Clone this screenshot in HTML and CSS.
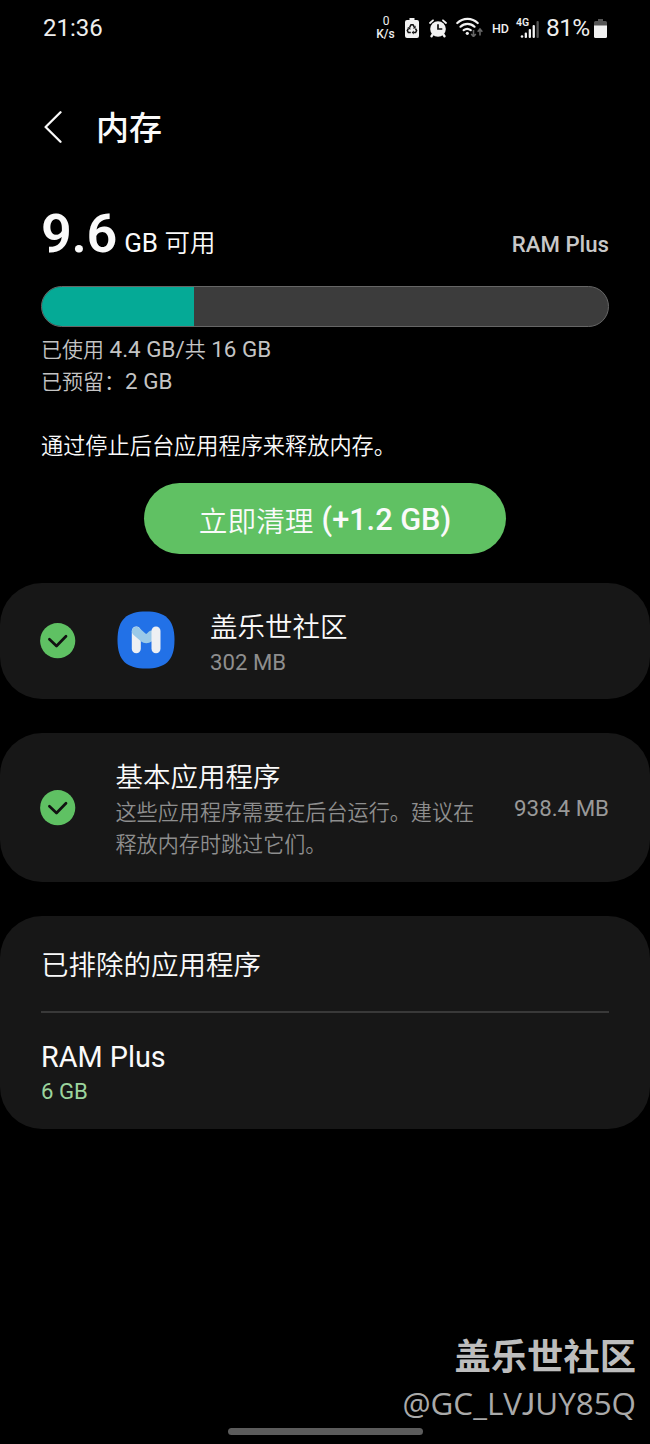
FILE: index.html
```html
<!DOCTYPE html>
<html lang="zh-CN">
<head>
<meta charset="utf-8">
<title>内存</title>
<link rel="stylesheet" href="styles.css">
</head>
<body>
<div class="screen">
  <header class="status">
    <span class="clock">21:36</span>
    <div class="status-icons">
      <div class="speed"><span>0</span><span>K/s</span></div>
      <svg class="i-recycle" width="14" height="20" viewBox="0 0 14 20">
        <path fill="#f2f2f2" d="M4.500 0h5v2H12a2 2 0 0 1 2 2v14a2 2 0 0 1-2 2H2a2 2 0 0 1-2-2V4a2 2 0 0 1 2-2h2.500z"/>
        <path fill="none" stroke="#111" stroke-width="1.500" d="M4.700 9.200 6 6.800h2l1.300 2.200M10.500 10.600l1.100 2-1 1.900H8.300M5.800 14.500H3.300l-1-1.900 1.200-2.200"/>
        <path fill="#111" d="M10.600 7.500v3H7.800zM8.700 12.400v4l-2-2zM2.300 9.300h3v2.800z"/>
      </svg>
      <svg class="i-alarm" width="18" height="19" viewBox="0 0 18 19">
        <path fill="none" stroke="#f2f2f2" stroke-width="1.800" stroke-linecap="round" d="M1 4 4 1.300M17 4l-3-2.700"/>
        <path fill="none" stroke="#f2f2f2" stroke-width="2.400" stroke-linecap="round" d="M4 15l-1.500 2.200M14 15l1.500 2.200"/>
        <circle cx="9" cy="10" r="7.800" fill="#f2f2f2"/>
        <path fill="none" stroke="#111" stroke-width="1.700" d="M9 5.300V10h4.300"/>
      </svg>
      <svg class="i-wifi" width="28" height="20" viewBox="0 0 28 20">
        <g fill="none" stroke="#f2f2f2" stroke-width="2.200" stroke-linecap="round">
          <path d="M1.300 6a14.500 14.500 0 0 1 20.400 0M4.500 9.700a10 10 0 0 1 14 0M7.700 13.200a5.600 5.600 0 0 1 7 0"/>
        </g>
        <circle cx="11.300" cy="16.300" r="1.600" fill="#f2f2f2"/>
        <path fill="none" stroke="#666" stroke-width="1.600" d="M17.500 13v6.500M15.200 17l2.300 2.500 2.300-2.500M24 18.500V12M21.700 14.700 24 12l2.300 2.700"/>
      </svg>
      <span class="hd">HD</span>
      <div class="cell">
        <span class="net">4G</span>
        <svg width="19" height="17" viewBox="0 0 19 17">
          <g fill="#f2f2f2"><circle cx="2" cy="15.500" r="1.300"/><rect x="4.700" y="11.500" width="2.300" height="5.500" rx="1"/><rect x="8.700" y="8" width="2.300" height="9" rx="1"/><rect x="12.600" y="4" width="2.300" height="13" rx="1"/></g>
          <rect x="16.500" y="0" width="2.300" height="17" rx="1" fill="#555"/>
        </svg>
      </div>
      <span class="percent">81%</span>
      <svg class="i-battery" width="13" height="19" viewBox="0 0 13 19">
        <path fill="#555" d="M4 0h5v2h2.500A1.500 1.500 0 0 1 13 3.500V7H0V3.500A1.500 1.500 0 0 1 1.500 2H4z"/>
        <path fill="#f2f2f2" d="M0 6.500h13v11a1.500 1.500 0 0 1-1.500 1.500h-10A1.500 1.500 0 0 1 0 17.500z"/>
      </svg>
    </div>
  </header>

  <div class="titlebar">
    <svg width="18" height="32" viewBox="0 0 18 32"><path fill="none" stroke="#fafafa" stroke-width="2.300" stroke-linecap="round" stroke-linejoin="round" d="M16.500 1.300 1.600 16l14.900 14.700"/></svg>
    <h1 class="title">内存</h1>
  </div>

  <section class="summary">
    <div class="available">
      <div class="amount"><span class="num">9.6</span><span class="unit">GB <span class="thin">可用</span></span></div>
      <span class="ramplus">RAM Plus</span>
    </div>
    <div class="bar"><div class="used"></div></div>
    <div class="stats">
      <div><span class="cj">已使用</span> 4.4 GB/<span class="cj">共</span> 16 GB</div>
      <div><span class="cj">已预留：</span>2 GB</div>
    </div>
    <p class="hint">通过停止后台应用程序来释放内存。</p>
    <button class="clean"><span class="cjk-part">立即清理</span><span class="gain">(+1.2 GB)</span></button>
  </section>

  <section class="card card-app">
    <svg class="check" width="36" height="36" viewBox="0 0 36 36"><circle cx="17.700" cy="17.700" r="17.600" fill="#5fc163"/><path fill="none" stroke="#111" stroke-width="2.700" stroke-linecap="round" stroke-linejoin="round" d="m9.400 16.200 7.100 6.800L26 13.200"/></svg>
    <svg class="appicon" width="58" height="58" viewBox="0 0 58 58">
      <path fill="#2271e7" d="M29 .5C48 .5 57.500 8 57.500 29S48 57.500 29 57.500 .5 50 .5 29 10 .5 29 .5z"/>
      <path fill="none" stroke="#eef0f3" stroke-width="9" stroke-linecap="round" d="M19.300 20v17.700"/>
      <path fill="none" stroke="#9ac9e8" stroke-width="9" stroke-linecap="round" stroke-linejoin="round" d="m19.300 20.300 7 6.200q3 2.200 6 0l2.500-2.400"/>
      <path fill="none" stroke="#eef0f3" stroke-width="9" stroke-linecap="round" d="M39 20v17.700"/>
    </svg>
    <div class="text">
      <div class="name">盖乐世社区</div>
      <div class="size">302 MB</div>
    </div>
  </section>

  <section class="card card-basic">
    <svg class="check" width="36" height="36" viewBox="0 0 36 36"><circle cx="17.700" cy="17.700" r="17.600" fill="#5fc163"/><path fill="none" stroke="#111" stroke-width="2.700" stroke-linecap="round" stroke-linejoin="round" d="m9.400 16.200 7.100 6.800L26 13.200"/></svg>
    <div class="text">
      <div class="name">基本应用程序</div>
      <div class="desc">这些应用程序需要在后台运行。建议在<br>释放内存时跳过它们。</div>
    </div>
    <span class="basic-size">938.4 MB</span>
  </section>

  <section class="card card-more">
    <div class="excluded">已排除的应用程序</div>
    <div class="plus">
      <div class="plus-name">RAM Plus</div>
      <div class="plus-size">6 GB</div>
    </div>
  </section>

  <footer class="foot">
    <div class="mark">盖乐世社区</div>
    <div class="user">@GC_LV<span class="j">J</span>UY85Q</div>
    <div class="handle"></div>
  </footer>
</div>
</body>
</html>
```
FILE: styles.css
```css
* { box-sizing: border-box; }
body { margin: 0; background: #000; }
.screen {
  width: 650px; height: 1444px; overflow: hidden;
  display: flex; flex-direction: column;
  background: #000; color: #fafafa;
  font-family: Roboto, "Noto Sans CJK SC", sans-serif;
  white-space: nowrap;
}
.status { height: 56px; padding: 0 43px; display: flex; justify-content: space-between; align-items: center; flex: none; }
.clock { font-size: 24px; line-height: 30px; color: #eee; margin-top: -1px; }
.status-icons { display: flex; align-items: center; color: #eee; }
.speed { display: flex; flex-direction: column; align-items: center; font-size: 12px; line-height: 13px; width: 19px; font-weight: 500; }
.speed span:first-child { padding-left: 1px; font-weight: 400; }
.i-recycle { margin-left: 10px; }
.i-alarm { margin-left: 10px; }
.i-wifi { margin-left: 9px; margin-top: -2px; }
.hd { font-size: 12.500px; font-weight: 500; margin-left: 8px; width: 17px; }
.cell { display: flex; align-items: flex-end; height: 20px; width: 23px; margin-left: 7px; position: relative; justify-content: flex-end; }
.net { position: absolute; left: 0; top: -1px; font-size: 10.500px; line-height: 11px; font-weight: 600; }
.percent { font-size: 24.500px; line-height: 30px; margin-left: 7px; width: 44px; letter-spacing: -0.600px; }
.i-battery { margin-left: 4px; }

.titlebar { height: 145px; flex: none; padding: 0 44px 3px; display: flex; align-items: center; gap: 34px; }
.title { margin: 0; font-size: 33px; line-height: 48px; font-weight: 500; padding-top: 3px; }

.summary { height: 382px; flex: none; padding: 0 41px; display: flex; flex-direction: column; }
.available { height: 85px; display: flex; justify-content: space-between; align-items: baseline; }
.amount { display: flex; align-items: baseline; gap: 7px; }
.num { font-size: 54px; line-height: 65px; font-weight: 600; letter-spacing: -0.300px; }
.unit { font-size: 26px; line-height: 30px; }
.thin, .name, .excluded, .hint, .desc, .cj, .cjk-part { font-weight: 350; }
.thin { font-family: "Noto Sans CJK SC", sans-serif; font-size: 25.500px; }
.ramplus { font-size: 22.200px; line-height: 30px; font-weight: 500; color: #c8c8c8; }
.bar { height: 41px; flex: none; border-radius: 21px; background: #3c3c3c; border: 1px solid #666; overflow: hidden; }
.used { width: 152px; height: 39px; background: #05aa96; }
.stats { margin-top: 7px; font-size: 22.400px; line-height: 31px; color: #c4c4c4; }
.cj { font-size: 21px; }
.hint { margin: 32px 0 0; font-size: 22.200px; line-height: 32px; }
.clean { margin: 21px auto 0; width: 362px; height: 71px; flex: none; border: 0; border-radius: 36px; background: #60c163; color: #fafafa; font-family: inherit; display: flex; align-items: center; justify-content: center; gap: 8px; padding: 2px 0 0; }
.cjk-part { font-size: 28.700px; }
.gain { font-size: 30.700px; font-weight: 500; }

.card { background: #171717; border-radius: 42px; flex: none; padding: 0 41px 0 40px; display: flex; }
.check { flex: none; }
.card-app { height: 116px; align-items: center; }
.appicon { margin-left: 41px; margin-top: -2px; }
.card-app .text { margin-left: 35px; padding-top: 4px; }
.name { font-size: 27.500px; line-height: 38px; }
.size { font-size: 22.200px; line-height: 30px; color: #8e8e8e; }
.card-basic { margin-top: 34px; height: 149px; align-items: center; }
.card-basic .text { margin-left: 39.500px; flex: 1; padding-top: 4px; }
.desc { font-size: 21.100px; line-height: 32px; color: #8e8e8e; }
.basic-size { font-size: 22.300px; color: #999; padding-top: 0; }
.card-more { margin-top: 34px; height: 213px; flex-direction: column; padding: 0 41px; }
.excluded { height: 97px; flex: none; border-bottom: 2px solid #393939; font-size: 27.500px; line-height: 99px; }
.plus { padding-top: 26px; }
.plus-name { font-size: 28.800px; line-height: 37px; }
.plus-size { font-size: 22.200px; line-height: 31px; color: #9bd49d; }

.foot { flex: 1; display: flex; flex-direction: column; align-items: flex-end; justify-content: flex-end; padding: 0 14px 9px; color: #bdbdbd; }
.mark { font-size: 36.300px; line-height: 46px; font-weight: 700; }
.user { font-family: "Open Sans", sans-serif; font-size: 31.400px; line-height: 44px; color: #aaa; padding-bottom: 3px; }
.j { font-family: Lato, sans-serif; }
.handle { align-self: center; width: 195px; height: 7px; border-radius: 4px; background: #5c5c5c; }
```
